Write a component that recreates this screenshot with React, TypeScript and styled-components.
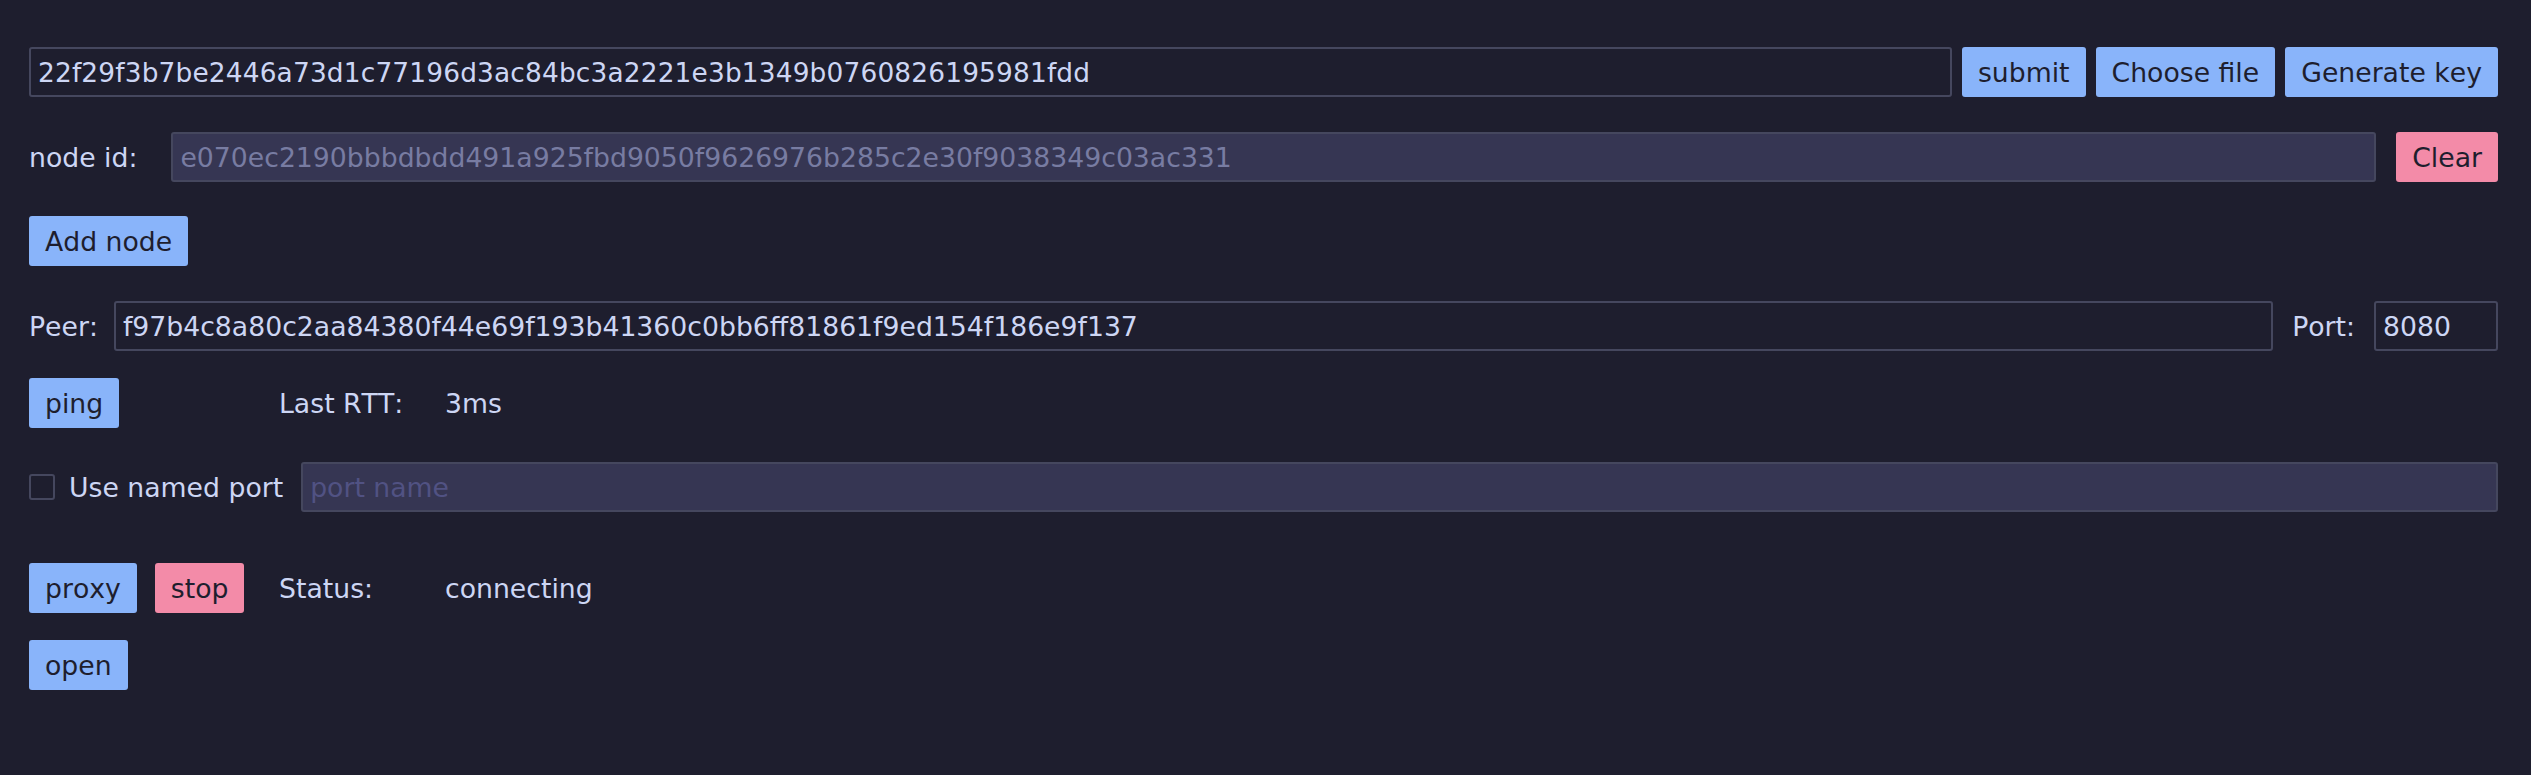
import React from "react";
import styled, { createGlobalStyle } from "styled-components";

const Global = createGlobalStyle`
  html, body {
    margin: 0;
    padding: 0;
    background: #1e1e2e;
  }
  body {
    font-family: "DejaVu Sans", "Noto Sans", sans-serif;
    font-size: 26.7px;
    font-kerning: none;
    color: #cdd6f4;
  }
  * { box-sizing: border-box; }
`;

const Page = styled.div`
  min-height: 775px;
  padding: 47px 33px 0 29px;
  display: flex;
  flex-direction: column;
`;

const Row = styled.div<{ $mt?: number; $gap?: number }>`
  display: flex;
  align-items: center;
  height: 50px;
  margin-top: ${(p) => p.$mt ?? 0}px;
  gap: ${(p) => p.$gap ?? 19}px;
`;

const Input = styled.input<{ $w?: number; $fs?: number; $ls?: number }>`
  font: inherit;
  font-kerning: none;
  ${(p) => (p.$fs ? `font-size: ${p.$fs}px;` : "")}
  ${(p) => (p.$ls ? `letter-spacing: ${p.$ls}px;` : "")}
  height: 50px;
  padding: 0 7px;
  border: 2px solid #45475e;
  border-radius: 3px;
  background: #1e1e2e;
  color: #cdd6f4;
  outline: none;
  ${(p) => (p.$w ? `width: ${p.$w}px; flex: none;` : `flex: 1; min-width: 0;`)}
  &:disabled {
    background: #363653;
    color: #787ca2;
  }
  &::placeholder {
    color: #515283;
  }
`;

const Button = styled.button<{ $variant?: "blue" | "red" }>`
  font: inherit;
  font-kerning: none;
  height: 50px;
  padding: 0 16px;
  border: none;
  border-radius: 3px;
  background: ${(p) => (p.$variant === "red" ? "#f38ba8" : "#89b4fa")};
  color: #1e1e2e;
  cursor: pointer;
  flex: none;
  white-space: nowrap;
`;

const Label = styled.span<{ $mr?: number }>`
  flex: none;
  white-space: nowrap;
  margin-right: ${(p) => p.$mr ?? 0}px;
`;

const ButtonGroup = styled.div`
  display: flex;
  align-items: center;
  gap: 18px;
  width: 250px;
  flex: none;
`;

const StatLabel = styled.span`
  width: 166px;
  flex: none;
`;

const StatValue = styled.span``;

const CheckLabel = styled.label`
  display: flex;
  align-items: center;
  gap: 14px;
  flex: none;
  white-space: nowrap;
`;

const Checkbox = styled.span`
  width: 26px;
  height: 26px;
  border: 2px solid #45475e;
  border-radius: 3px;
  display: inline-block;
`;

export default function App() {
  return (
    <>
      <Global />
      <Page>
        <Row $gap={10}>
          <Input
            $fs={26.42}
            $ls={0.15}
            defaultValue="22f29f3b7be2446a73d1c77196d3ac84bc3a2221e3b1349b0760826195981fdd"
          />
          <Button>submit</Button>
          <Button>Choose file</Button>
          <Button>Generate key</Button>
        </Row>
        <Row $mt={35} $gap={20}>
          <Label $mr={14}>node id:</Label>
          <Input disabled value="e070ec2190bbbdbdd491a925fbd9050f9626976b285c2e30f9038349c03ac331" readOnly />
          <Button $variant="red">Clear</Button>
        </Row>
        <Row $mt={34}>
          <Button>Add node</Button>
        </Row>
        <Row $mt={35}>
          <Label $mr={-3}>Peer:</Label>
          <Input defaultValue="f97b4c8a80c2aa84380f44e69f193b41360c0bb6ff81861f9ed154f186e9f137" />
          <Label>Port:</Label>
          <Input $w={124} defaultValue="8080" />
        </Row>
        <Row $mt={27} $gap={0}>
          <ButtonGroup>
            <Button>ping</Button>
          </ButtonGroup>
          <StatLabel>Last RTT:</StatLabel>
          <StatValue>3ms</StatValue>
        </Row>
        <Row $mt={34} $gap={18}>
          <CheckLabel>
            <Checkbox />
            Use named port
          </CheckLabel>
          <Input placeholder="port name" disabled />
        </Row>
        <Row $mt={51} $gap={0}>
          <ButtonGroup>
            <Button>proxy</Button>
            <Button $variant="red">stop</Button>
          </ButtonGroup>
          <StatLabel>Status:</StatLabel>
          <StatValue>connecting</StatValue>
        </Row>
        <Row $mt={27}>
          <Button>open</Button>
        </Row>
      </Page>
    </>
  );
}
